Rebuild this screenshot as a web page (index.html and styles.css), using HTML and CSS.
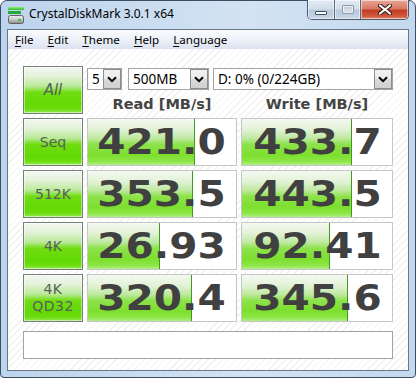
FILE: index.html
```html
<!DOCTYPE html>
<html>
<head>
<meta charset="utf-8">
<title>CrystalDiskMark 3.0.1 x64</title>
<link rel="stylesheet" href="styles.css">
</head>
<body>
<div class="window">
  <div class="titlebar">
    <svg class="app-icon" width="16" height="17" viewBox="0 0 16 17">
      <defs>
        <linearGradient id="gTop" x1="0" y1="0" x2="0" y2="1">
          <stop offset="0" stop-color="#8ef070"/>
          <stop offset="1" stop-color="#2fb82f"/>
        </linearGradient>
        <linearGradient id="gDrive" x1="0" y1="0" x2="0" y2="1">
          <stop offset="0" stop-color="#f4f4f4"/>
          <stop offset="0.5" stop-color="#c8c8c8"/>
          <stop offset="1" stop-color="#8a8a8a"/>
        </linearGradient>
      </defs>
      <rect x="0" y="0" width="16" height="3" fill="url(#gTop)"/>
      <rect x="0" y="4" width="13" height="3" fill="#27a83a"/>
      <rect x="0.5" y="8.5" width="15" height="8" rx="2" fill="url(#gDrive)" stroke="#606060"/>
      <rect x="10" y="12" width="3" height="2" fill="#2ed040"/>
    </svg>
    <span class="title">CrystalDiskMark 3.0.1 x64</span>
    <div class="caption-buttons">
      <div class="cbtn cbtn-min"><span class="glyph-min"></span></div>
      <div class="cbtn cbtn-max"><span class="glyph-max"></span></div>
      <div class="cbtn cbtn-close">
        <svg width="14" height="11" viewBox="0 0 14 11">
          <path d="M2 1.5 L12 9.5 M12 1.5 L2 9.5" stroke="#3b211a" stroke-width="4.2" stroke-linecap="round"/>
          <path d="M2 1.5 L12 9.5 M12 1.5 L2 9.5" stroke="#ffffff" stroke-width="2.2" stroke-linecap="round"/>
        </svg>
      </div>
    </div>
  </div>
  <div class="client">
    <div class="menubar">
      <span class="menu-item"><u>F</u>ile</span>
      <span class="menu-item"><u>E</u>dit</span>
      <span class="menu-item"><u>T</u>heme</span>
      <span class="menu-item"><u>H</u>elp</span>
      <span class="menu-item"><u>L</u>anguage</span>
    </div>
    <div class="content">
      <div class="bench">
        <div class="test-btn btn-all"><span class="all-label">All</span></div>
        <div class="combos">
          <div class="combo combo-count"><span class="combo-text">5</span><span class="combo-arrow"><svg width="10" height="7" viewBox="0 0 10 7"><path d="M1 1.2 L5 5.2 L9 1.2" fill="none" stroke="#000" stroke-width="2"/></svg></span></div>
          <div class="combo combo-size"><span class="combo-text">500MB</span><span class="combo-arrow"><svg width="10" height="7" viewBox="0 0 10 7"><path d="M1 1.2 L5 5.2 L9 1.2" fill="none" stroke="#000" stroke-width="2"/></svg></span></div>
          <div class="combo combo-drive"><span class="combo-text">D: 0% (0/224GB)</span><span class="combo-arrow"><svg width="10" height="7" viewBox="0 0 10 7"><path d="M1 1.2 L5 5.2 L9 1.2" fill="none" stroke="#000" stroke-width="2"/></svg></span></div>
        </div>
        <div class="col-head">Read [MB/s]</div>
        <div class="col-head">Write [MB/s]</div>

        <div class="test-btn">Seq</div>
        <div class="meter"><div class="bar" style="width:107px"></div><span class="val">421.0</span></div>
        <div class="meter"><div class="bar" style="width:110px"></div><span class="val">433.7</span></div>

        <div class="test-btn">512K</div>
        <div class="meter"><div class="bar" style="width:105px"></div><span class="val">353.5</span></div>
        <div class="meter"><div class="bar" style="width:110px"></div><span class="val">443.5</span></div>

        <div class="test-btn">4K</div>
        <div class="meter"><div class="bar" style="width:72px"></div><span class="val">26.93</span></div>
        <div class="meter"><div class="bar" style="width:88px"></div><span class="val">92.41</span></div>

        <div class="test-btn two-line"><span>4K</span><span>QD32</span></div>
        <div class="meter"><div class="bar" style="width:104px"></div><span class="val">320.4</span></div>
        <div class="meter"><div class="bar" style="width:106px"></div><span class="val">345.6</span></div>
      </div>
      <div class="status"></div>
    </div>
  </div>
</div>
</body>
</html>
```
FILE: styles.css
```css
* { box-sizing: border-box; }
html, body { margin: 0; padding: 0; }
body {
  width: 416px;
  height: 378px;
  overflow: hidden;
  background: #ffffff;
  font-family: "Noto Sans", "DejaVu Sans", sans-serif;
}

.window {
  width: 416px;
  height: 378px;
  border: 1px solid #3f4d60;
  border-radius: 7px 7px 4px 4px;
  background:
    linear-gradient(to right, rgba(255,255,255,0) 0%, rgba(255,255,255,0.35) 60%, rgba(255,255,255,0.1) 100%),
    #bcd4ed;
  padding: 0 6px 6px;
  display: flex;
  flex-direction: column;
}

/* ---------- title bar ---------- */
.titlebar {
  height: 28px;
  display: flex;
  align-items: flex-start;
  flex-shrink: 0;
}
.app-icon {
  margin: 6px 0 0 1px;
  flex-shrink: 0;
}
.title {
  margin: 5px 0 0 5px;
  font-size: 12px;
  line-height: 16px;
  color: #000;
  white-space: nowrap;
}
.caption-buttons {
  margin-left: auto;
  margin-top: -1px;
  display: flex;
  height: 20px;
  border: 1px solid #4b586a;
  border-top: none;
  border-radius: 0 0 5px 5px;
  overflow: hidden;
}
.cbtn {
  height: 100%;
  display: flex;
  align-items: center;
  justify-content: center;
  box-shadow: inset 0 0 0 1px rgba(255,255,255,0.55);
}
.cbtn-min, .cbtn-max {
  width: 27px;
  background: linear-gradient(to bottom, #e3ebf5 0%, #d2deeb 45%, #b9c9dc 55%, #c7d6e7 100%);
  border-right: 1px solid #5a6779;
}
.cbtn-max { width: 26px; }
.cbtn-close {
  width: 47px;
  background: linear-gradient(to bottom, #e9a797 0%, #d97a66 45%, #c43d22 55%, #d0583d 85%, #e08a6e 100%);
}
.glyph-min {
  width: 12px;
  height: 4px;
  margin-top: 7px;
  background: #fff;
  border: 1px solid #3d4a5a;
  border-radius: 1px;
}
.glyph-max {
  width: 12px;
  height: 9px;
  border: 1px solid #8e9bab;
  box-shadow: inset 0 0 0 1px #e9eef4, inset 0 2px 0 1px #c8d2de;
  background: #d6dfe9;
  border-radius: 1px;
}

/* ---------- client ---------- */
.client {
  flex: 1;
  border: 1px solid #687789;
  background:
    repeating-linear-gradient(135deg, #ffffff 0px, #ffffff 4px, #f1f1f1 4px, #f1f1f1 5px);
  display: flex;
  flex-direction: column;
}

.menubar {
  height: 19px;
  display: flex;
  flex-shrink: 0;
  background: linear-gradient(to bottom, #fafbfd 0%, #eef2f8 45%, #dbe2ee 100%);
  font-size: 11.6px;
  line-height: 19px;
  color: #000;
}
.menu-item {
  padding: 0 7px;
  white-space: nowrap;
}
.menu-item u { text-decoration-thickness: 1px; text-underline-offset: 2px; }

.content {
  flex: 1;
  padding: 17px 0 10px 15px;
  display: flex;
  flex-direction: column;
}

.bench {
  display: grid;
  grid-template-columns: 60px 150px 152px;
  grid-template-rows: 24px 20px 48px 48px 48px 48px;
  column-gap: 4px;
  row-gap: 4px;
}

/* test buttons */
.test-btn {
  border: 1px solid #7b7f7b;
  background: linear-gradient(to bottom,
    #f3f7f1 0%, #e4f3da 20%, #b9e998 42%, #70dd12 55%, #62d902 80%, #6cdc10 92%, #9ae95c 100%);
  box-shadow: inset 0 0 0 1px rgba(255,255,255,0.45);
  display: flex;
  flex-direction: column;
  align-items: center;
  justify-content: center;
  font-family: "DejaVu Sans", sans-serif;
  font-size: 14px;
  line-height: 17px;
  color: #5a5e5a;
}
.btn-all {
  grid-row: 1 / 3;
  grid-column: 1;
}
.all-label {
  font-style: italic;
  font-size: 15px;
}
.two-line span { display: block; letter-spacing: 0.5px; }

/* combos */
.combos {
  grid-row: 1;
  grid-column: 2 / 4;
  align-self: start;
  margin-top: 2px;
  display: flex;
  height: 22px;
}
.combo {
  height: 22px;
  border: 1px solid #a3a3a3;
  background: #fff;
  display: flex;
  align-items: stretch;
}
.combo-count { width: 35px; margin-right: 6px; }
.combo-size { width: 81px; margin-right: 4px; }
.combo-drive { width: 180px; }
.combo-text {
  flex: 1;
  padding-left: 4px;
  font-size: 13.5px;
  line-height: 20px;
  color: #000;
  white-space: nowrap;
  overflow: hidden;
}
.combo-arrow {
  width: 18px;
  border: 1px solid #8d8d8d;
  margin: 0;
  background: linear-gradient(to bottom, #f2f2f2 0%, #e9e9e9 50%, #d9d9d9 51%, #d0d0d0 100%);
  display: flex;
  align-items: center;
  justify-content: center;
}

/* headers */
.col-head {
  grid-row: 2;
  text-align: center;
  font-family: "DejaVu Sans", sans-serif;
  font-weight: bold;
  font-size: 14.5px;
  line-height: 20px;
  color: #444444;
  white-space: nowrap;
}

/* meters */
.meter {
  display: grid;
  border: 1px solid #c6c6c6;
  background: #ffffff;
  overflow: hidden;
}
.bar {
  grid-area: 1 / 1;
  justify-self: start;
  height: 100%;
  border-right: 1px solid #3f9a22;
  background: linear-gradient(to bottom,
    #f4f8f1 0%, #e3f2d8 22%, #bfe9a0 42%, #8ee24c 55%, #7ddf2e 78%, #8ce546 92%, #b2ef86 100%);
}
.val {
  grid-area: 1 / 1;
  justify-self: end;
  align-self: center;
  margin-right: 10px;
  display: inline-block;
  font-family: "DejaVu Sans", sans-serif;
  font-weight: bold;
  font-size: 35px;
  line-height: 36px;
  color: #404040;
  transform: scaleX(1.16);
  transform-origin: right center;
  white-space: nowrap;
}

/* status */
.status {
  margin-top: 9px;
  width: 370px;
  height: 28px;
  border: 1px solid #a2a2a2;
  background: #ffffff;
}
```
